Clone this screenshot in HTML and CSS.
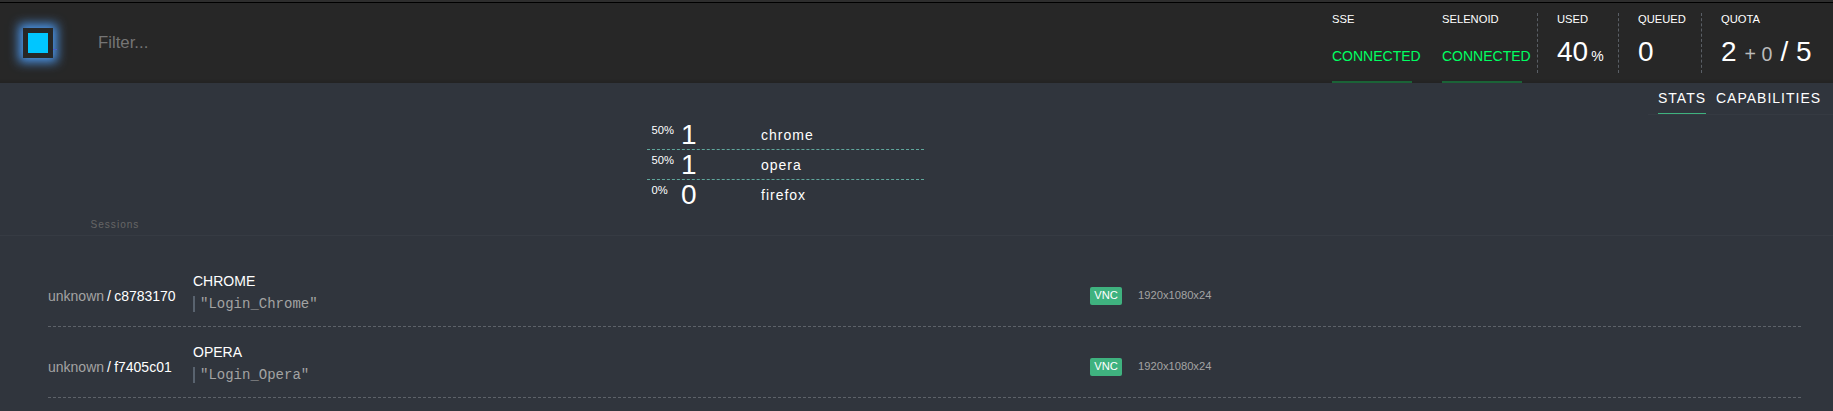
FILE: index.html
```html
<!DOCTYPE html>
<html lang="en">
<head>
<meta charset="utf-8">
<title>Selenoid UI</title>
<link rel="stylesheet" href="styles.css">
</head>
<body>
<header class="topbar">
  <div class="logo"></div>
  <span class="logo-link"></span>
  <input class="filter" type="text" placeholder="Filter...">
  <div class="status status-sse"><div class="label">SSE</div><div class="state">CONNECTED</div></div>
  <div class="status status-selenoid"><div class="label">SELENOID</div><div class="state">CONNECTED</div></div>
  <div class="metric metric-used"><div class="label">USED</div><div class="value">40<span class="unit">%</span></div></div>
  <div class="metric metric-queued"><div class="label">QUEUED</div><div class="value">0</div></div>
  <div class="metric metric-quota"><div class="label">QUOTA</div><div class="value">2<span class="pending">+ 0</span>/ 5</div></div>
</header>
<main class="content">
  <nav class="tabs"><a class="tab tab-active">STATS</a><a class="tab">CAPABILITIES</a></nav>
  <section class="browsers">
    <div class="browser"><span class="share">50%</span><span class="count">1</span><span class="name">chrome</span></div>
    <div class="browser"><span class="share">50%</span><span class="count">1</span><span class="name">opera</span></div>
    <div class="browser"><span class="share">0%</span><span class="count">0</span><span class="name">firefox</span></div>
  </section>
  <div class="sessions-title">Sessions</div>
  <section class="sessions">
    <div class="session">
      <div class="ident"><span class="muted">unknown</span><span class="id">/ c8783170</span></div>
      <div class="info"><div class="kind">CHROME</div><div class="test">"Login_Chrome"</div></div>
      <span class="vnc">VNC</span><span class="screen">1920x1080x24</span>
    </div>
    <div class="session">
      <div class="ident"><span class="muted">unknown</span><span class="id">/ f7405c01</span></div>
      <div class="info"><div class="kind">OPERA</div><div class="test">"Login_Opera"</div></div>
      <span class="vnc">VNC</span><span class="screen">1920x1080x24</span>
    </div>
  </section>
</main>
</body>
</html>
```
FILE: styles.css
```css
* { box-sizing: border-box; }
body {
  margin: 0;
  height: 411px;
  overflow: hidden;
  background: #30353d;
  color: #fff;
  font-family: "Liberation Sans", Arial, sans-serif;
  font-size: 14px;
}
.topbar {
  display: flex;
  height: 83px;
  background:
    linear-gradient(transparent 78px, rgba(0, 0, 0, .12)),
    linear-gradient(#2e2e2e 2px, #000 2px, #000 3px, #272727 3px);
}
.logo {
  width: 30px;
  height: 30px;
  margin: 28px 0 0 23px;
  border: 5px solid #272727;
  background: #00c6ff;
  box-shadow: 0 0 10px 4px #4c98ee;
}
.logo-link {
  z-index: 1;
  width: 4px;
  height: 1px;
  margin-top: 49px;
  background: #4a5cc8;
}
.filter {
  width: 400px;
  height: 30px;
  margin: 28px auto 0 41px;
  padding: 0;
  border: 0;
  background: none;
  color: #fff;
  font: 16.8px "Liberation Sans", Arial, sans-serif;
}
.filter::placeholder { color: #757575; }
.label {
  font-size: 11.2px;
  line-height: 13px;
  color: #fff;
}
.status {
  width: 110px;
  padding-top: 13px;
}
.status-selenoid { width: 95px; }
.state {
  width: 80px;
  height: 57px;
  padding-top: 22px;
  line-height: 16px;
  color: #00ff62;
  border-bottom: 2px solid #1b6337;
}
.metric {
  height: 60px;
  margin-top: 13px;
  padding-left: 19px;
  border-left: 1px dashed #5a5f66;
}
.metric-used { width: 81px; }
.metric-queued { width: 83px; }
.metric-quota { width: 132px; }
.value {
  font-size: 28px;
  line-height: 32px;
  margin-top: 10px;
  white-space: nowrap;
}
.unit { font-size: 14px; margin-left: 3px; }
.pending { font-size: 19.6px; margin: 0 8px; color: #bbb; }
.tabs {
  display: flex;
  gap: 10px;
  width: 185px;
  height: 32px;
  margin-left: auto;
  padding-left: 10px;
  border-bottom: 1px solid #353a42;
}
.tab {
  height: 31px;
  padding-top: 7px;
  line-height: 16px;
  letter-spacing: 1px;
  color: #fff;
}
.tab-active {
  width: 48px;
  border-bottom: 1px solid #3fb27f;
}
.browsers {
  width: 277px;
  margin: 5px 0 0 647px;
}
.browser {
  display: flex;
  height: 30px;
  padding-left: 4.5px;
  border-bottom: 1px dashed #5fa79c;
}
.browser:last-child { border-bottom-color: transparent; }
.share {
  width: 29.5px;
  padding-top: 4px;
  font-size: 11.2px;
  line-height: 13px;
  color: #fff;
}
.count { width: 80px; font-size: 28px; line-height: 29px; }
.name { line-height: 30px; letter-spacing: 1px; color: #fff; }
.sessions-title {
  height: 26px;
  padding: 9px 0 0 90.5px;
  border-bottom: 1px solid #363b43;
  font-size: 10.08px;
  line-height: 12px;
  letter-spacing: 1px;
  color: #666;
}
.sessions { margin: 20px 32px 0 48px; }
.session {
  display: flex;
  height: 71px;
  border-bottom: 1px dashed #5d6269;
}
.ident { width: 145px; padding-top: 32px; line-height: 16px; }
.muted { margin-right: 3px; color: #a3a3a3; }
.id { word-spacing: -.7px; }
.info { width: 897px; padding-top: 17px; line-height: 16px; }
.test {
  height: 16px;
  margin-top: 7px;
  padding-left: 5px;
  border-left: 2px solid #59636f;
  font-family: "Liberation Mono", monospace;
  line-height: 16px;
  color: #a3a3a3;
}
.vnc {
  width: 32px;
  height: 18px;
  margin-top: 31px;
  border-radius: 2px;
  background: #3fb27f;
  font-size: 11.2px;
  line-height: 17px;
  text-align: center;
}
.screen {
  margin: 33px 0 0 16px;
  font-size: 11.2px;
  line-height: 13px;
  color: #a3a3a3;
}
```
